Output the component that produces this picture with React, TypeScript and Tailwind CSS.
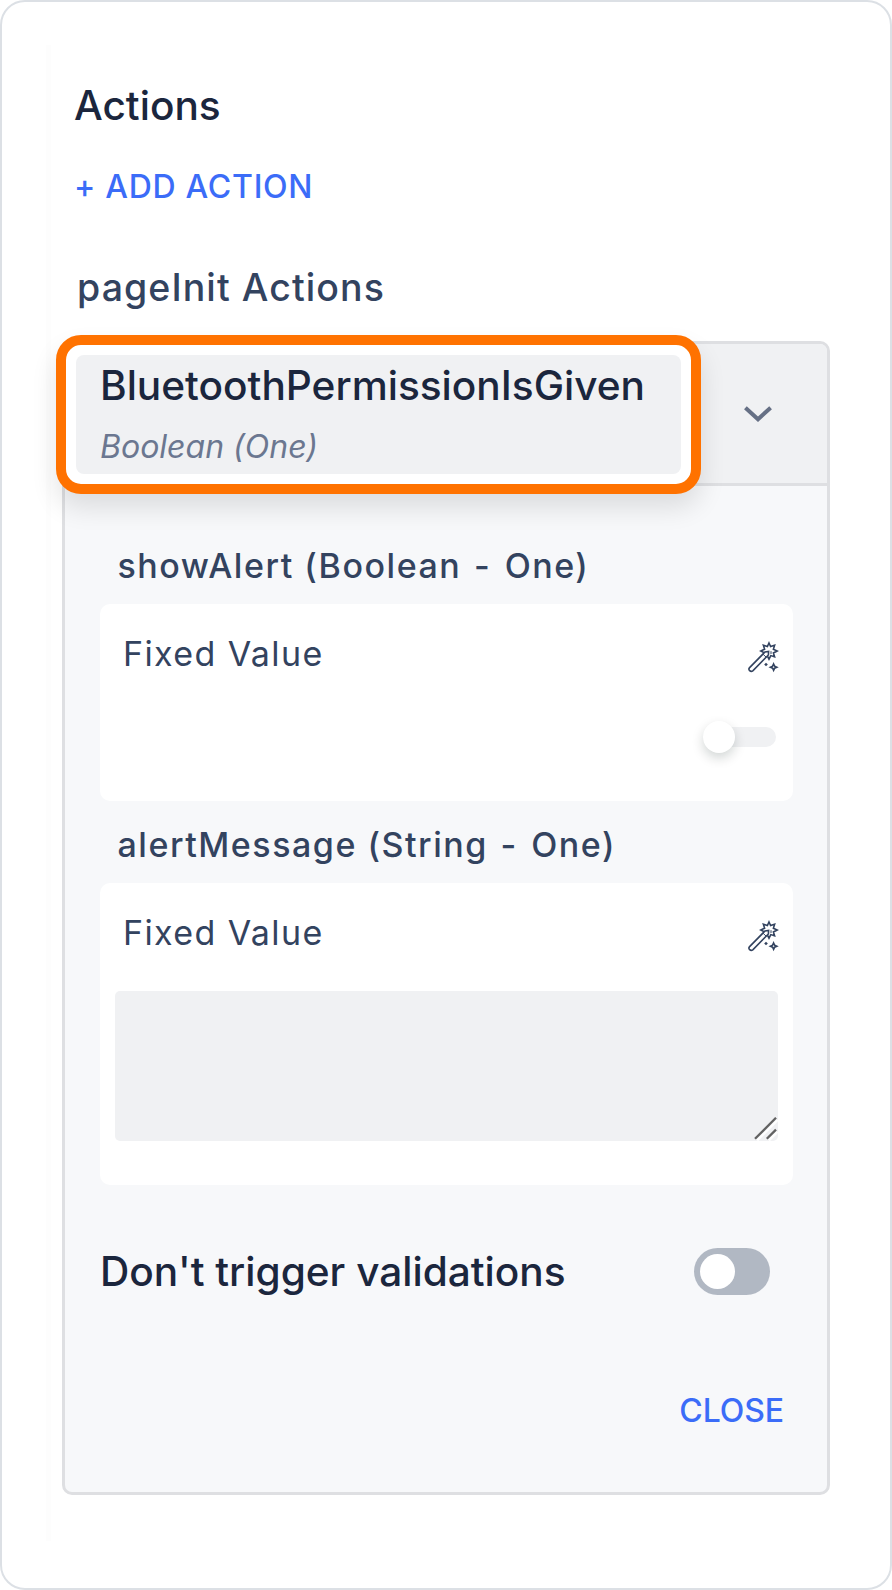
import type { ReactNode } from "react";

function WandIcon() {
  return (
    <svg
      className="h-8 w-8"
      viewBox="0 0 32 32"
      fill="none"
      stroke="#33435f"
      strokeWidth="1.6"
      strokeLinejoin="miter"
    >
      <path d="M22 2 L23.6 5.6 L27.6 4.2 L26.4 8.2 L30.2 10 L26.4 12 L27.6 15.8 L23.8 14.6 L22 18.2 L20.2 14.6 L16.4 15.8 L17.6 12 L13.8 10 L17.6 8.2 L16.4 4.2 L20.4 5.6 Z" />
      <path
        d="M2.6 26.6 L18 11 L21.6 10.4 L21.4 14 L5.8 29.8 Q4.2 31 2.6 29.7 Q1.2 28.1 2.6 26.6 Z"
        fill="#fff"
      />
      <path d="M16 13.2 L19.2 16.2" strokeWidth="1" />
      <path d="M24 10.2 V13" strokeWidth="1" />
      <path d="M19 21.7 L20.8 23.5 L19 25.3 L17.2 23.5 Z" fill="#33435f" stroke="none" />
      <path d="M26.6 23 L27.6 25.2 L29.8 26.2 L27.6 27.2 L26.6 29.4 L25.6 27.2 L23.4 26.2 L25.6 25.2 Z" />
    </svg>
  );
}

function ChevronIcon() {
  return (
    <svg className="h-[18px] w-8" viewBox="0 0 32 18" fill="none" stroke="#667085" strokeWidth="4">
      <path d="M3.4 2.7 L16 14.2 L28.6 2.7" strokeLinejoin="miter" />
    </svg>
  );
}

function ResizeGrip() {
  return (
    <svg className="h-6 w-6" viewBox="0 0 24 24" fill="none" strokeWidth="2.3">
      <path d="M3.2 23.4 L23.6 3 M15 23.4 L23.6 14.8" stroke="#fff" />
      <path d="M1 21.8 L22 0.8 M12.8 21.8 L22 12.6" stroke="#626262" />
    </svg>
  );
}

function ParamLabel({ name, type }: { name: string; type: string }) {
  return (
    <div className="pl-[17.5px] text-[34px] leading-10 font-medium tracking-[1.52px] whitespace-nowrap text-[#33435f]">
      {name} ({type} <span className="mr-[3px] ml-[2px]">-</span> One)
    </div>
  );
}

function FixedValueRow() {
  return (
    <div className="flex items-start justify-between pr-[14px] pl-[23px]">
      <span className="text-[34px] leading-10 tracking-[1.4px] text-[#33435f]">Fixed Value</span>
      <span className="mt-[7px]">
        <WandIcon />
      </span>
    </div>
  );
}

function Card({ children, className }: { children: ReactNode; className: string }) {
  return <div className={`rounded-[10px] bg-white pt-[30px] ${className}`}>{children}</div>;
}

export default function App() {
  return (
    <div className="h-[1590px] w-[892px] overflow-hidden rounded-[25px] border-2 border-[#dce0e5] bg-white pt-[43px] pl-[44px] font-[Inter,sans-serif]">
      <div className="h-[1496px] border-l-[5px] border-[#fdfdfd] pt-[37px] pl-[11px]">
        <h1 className="pl-[12px] text-[40.6px] leading-[48px] font-medium text-[#1b263d]">Actions</h1>
        <button className="mt-[37px] block pl-[12px] text-[32px] leading-10 font-[450] tracking-[0.72px] text-[#3b6cf8]">
          + ADD ACTION
        </button>
        <h2 className="mt-[59px] pl-[15px] text-[37.5px] leading-[44px] font-medium tracking-[1.08px] text-[#33435f]">
          pageInit Actions
        </h2>

        <section className="relative mt-[31px] h-[1154px] w-[768px] rounded-[10px] border-3 border-[#dedfe2] bg-[#f7f8fa]">
          <header className="flex h-[142px] items-center justify-end rounded-t-[7px] border-b-3 border-[#dedfe2] bg-[#f0f1f3] pr-[53px]">
            <ChevronIcon />
          </header>

          <div className="absolute top-[-9px] left-[-9px] h-[159px] w-[645px] rounded-[25px] border-10 border-[#ff7200] bg-white p-[10px] shadow-[0_14px_26px_rgba(0,0,0,0.11)]">
            <div className="h-full rounded-[8px] bg-[#f0f1f3] pt-[7px] pl-[24px]">
              <div className="text-[40.6px] leading-[48px] font-medium text-[#1b263d]">
                BluetoothPermissionIsGiven
              </div>
              <div className="mt-[17px] text-[32px] leading-10 text-[#6b7790] italic">Boolean (One)</div>
            </div>
          </div>

          <div className="pt-[60px] pr-[34px] pl-[35px]">
            <ParamLabel name="showAlert" type="Boolean" />
            <Card className="mt-[18px] h-[197px]">
              <FixedValueRow />
              <div className="mt-[53px] flex justify-end pr-[17px]">
                <div className="flex h-5 w-[73px] items-center rounded-full bg-[#f0f1f3]">
                  <div className="h-8 w-8 shrink-0 rounded-full bg-white shadow-[0_5px_12px_rgba(0,30,20,0.18)]" />
                </div>
              </div>
            </Card>

            <div className="mt-[24px]">
              <ParamLabel name="alertMessage" type="String" />
            </div>
            <Card className="mt-[18px] h-[302px]">
              <FixedValueRow />
              <div className="mt-[38px] mr-[15px] ml-[15px] flex h-[150px] items-end justify-end rounded-[5px] bg-[#f0f1f3]">
                <ResizeGrip />
              </div>
            </Card>

            <div className="mt-[62px] flex items-center justify-between pr-[23px]">
              <span className="pt-[2px] text-[40.6px] leading-[46px] font-medium text-[#1b263d]">
                Don't trigger validations
              </span>
              <div className="flex h-[47px] w-[76px] items-center rounded-full bg-[#b1b8c3] pl-[6px]">
                <div className="h-[35px] w-[35px] rounded-full bg-white" />
              </div>
            </div>

            <div className="mt-[96px] flex justify-end pr-[9px]">
              <button className="text-[32px] leading-10 font-[450] tracking-[-0.1px] text-[#3b6cf8]">CLOSE</button>
            </div>
          </div>
        </section>
      </div>
    </div>
  );
}
